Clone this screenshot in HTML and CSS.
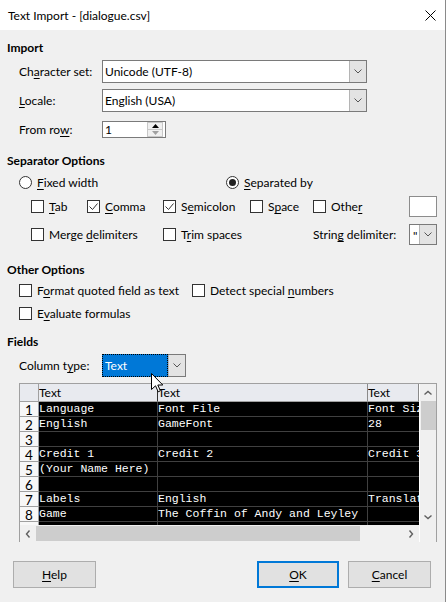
FILE: index.html
```html
<!DOCTYPE html>
<html>
<head>
<meta charset="utf-8">
<title>Text Import</title>
<link rel="stylesheet" href="styles.css">
</head>
<body>
<div class="window">
  <div class="titlebar">
    <span class="title">Text Import - [dialogue.csv]</span>
    <svg class="close" width="11" height="11" viewBox="0 0 11 11"><path d="M0.5 0.5 L10.5 10.5 M10.5 0.5 L0.5 10.5" stroke="#000" stroke-width="1" fill="none"/></svg>
  </div>
  <div class="dialog">
    <div class="hdr h-import">Import</div>

    <div class="row r-charset">
      <span class="lbl">Ch<u>a</u>racter set:</span>
      <div class="combo combo-wide"><span class="val">Unicode (UTF-8)</span><span class="cbtn"><svg width="8" height="5" viewBox="0 0 8 5"><path d="M0.5 0.5 L4 4 L7.5 0.5" stroke="#555" fill="none"/></svg></span></div>
    </div>
    <div class="row r-locale">
      <span class="lbl"><u>L</u>ocale:</span>
      <div class="combo combo-wide"><span class="val">English (USA)</span><span class="cbtn"><svg width="8" height="5" viewBox="0 0 8 5"><path d="M0.5 0.5 L4 4 L7.5 0.5" stroke="#555" fill="none"/></svg></span></div>
    </div>
    <div class="row r-fromrow">
      <span class="lbl">From ro<u>w</u>:</span>
      <div class="spin"><span class="val">1</span>
        <span class="spinbtns">
          <span class="sb up"><svg width="7" height="4" viewBox="0 0 7 4"><path d="M0 4 L3.5 0 L7 4 Z" fill="#000"/></svg></span>
          <span class="sb down"><svg width="7" height="4" viewBox="0 0 7 4"><path d="M0 0 L3.5 4 L7 0 Z" fill="#a0a0a0"/></svg></span>
        </span>
      </div>
    </div>

    <div class="hdr h-sep">Separator Options</div>
    <div class="row r-radio">
      <label class="opt w-fixed"><span class="radio"></span><span><u>F</u>ixed width</span></label>
      <label class="opt"><span class="radio on"><span class="dot"></span></span><span><u>S</u>eparated by</span></label>
    </div>
    <div class="row r-checks">
      <label class="opt w-tab"><span class="cb"></span><span><u>T</u>ab</span></label>
      <label class="opt w-comma"><span class="cb"><svg width="11" height="11" viewBox="0 0 11 11"><path d="M1.5 5.5 L4.5 8.5 L9.5 2.5" stroke="#333" fill="none"/></svg></span><span><u>C</u>omma</span></label>
      <label class="opt w-semi"><span class="cb"><svg width="11" height="11" viewBox="0 0 11 11"><path d="M1.5 5.5 L4.5 8.5 L9.5 2.5" stroke="#333" fill="none"/></svg></span><span>S<u>e</u>micolon</span></label>
      <label class="opt w-space"><span class="cb"></span><span>S<u>p</u>ace</span></label>
      <label class="opt w-other"><span class="cb"></span><span>Othe<u>r</u></span></label>
      <div class="field"></div>
    </div>
    <div class="row r-merge">
      <label class="opt w-merge"><span class="cb"></span><span>Merge <u>d</u>elimiters</span></label>
      <label class="opt w-trim"><span class="cb"></span><span>T<u>r</u>im spaces</span></label>
      <span class="w-strdelim">Strin<u>g</u> delimiter:</span>
      <div class="combo combo-small"><span class="val">"</span><span class="cbtn"><svg width="8" height="5" viewBox="0 0 8 5"><path d="M0.5 0.5 L4 4 L7.5 0.5" stroke="#555" fill="none"/></svg></span></div>
    </div>

    <div class="hdr h-other">Other Options</div>
    <div class="row r-format">
      <label class="opt w-format"><span class="cb"></span><span>F<u>o</u>rmat quoted field as text</span></label>
      <label class="opt"><span class="cb"></span><span>Detect special <u>n</u>umbers</span></label>
    </div>
    <div class="row r-eval">
      <label class="opt"><span class="cb"></span><span>E<u>v</u>aluate formulas</span></label>
    </div>

    <div class="hdr h-fields">Fields</div>
    <div class="row r-coltype">
      <span class="lbl">Column t<u>y</u>pe:</span>
      <div class="combo combo-type"><span class="val sel">Text</span><span class="cbtn"><svg width="8" height="5" viewBox="0 0 8 5"><path d="M0.5 0.5 L4 4 L7.5 0.5" stroke="#555" fill="none"/></svg></span></div>
    </div>

    <div class="grid">
      <div class="gmain">
        <div class="gtable">
          <div class="grow ghead"><div class="rh"></div><div class="c c1">Text</div><div class="c c2">Text</div><div class="c c3">Text</div></div>
          <div class="grow"><div class="rh">1</div><div class="c c1">Language</div><div class="c c2">Font File</div><div class="c c3">Font Size</div></div>
          <div class="grow"><div class="rh">2</div><div class="c c1">English</div><div class="c c2">GameFont</div><div class="c c3">28</div></div>
          <div class="grow"><div class="rh">3</div><div class="c c1"></div><div class="c c2"></div><div class="c c3"></div></div>
          <div class="grow"><div class="rh">4</div><div class="c c1">Credit 1</div><div class="c c2">Credit 2</div><div class="c c3">Credit 3</div></div>
          <div class="grow"><div class="rh">5</div><div class="c c1">(Your Name Here)</div><div class="c c2"></div><div class="c c3"></div></div>
          <div class="grow"><div class="rh">6</div><div class="c c1"></div><div class="c c2"></div><div class="c c3"></div></div>
          <div class="grow"><div class="rh">7</div><div class="c c1">Labels</div><div class="c c2">English</div><div class="c c3">Translation</div></div>
          <div class="grow"><div class="rh">8</div><div class="c c1">Game</div><div class="c c2">The Coffin of Andy and Leyley</div><div class="c c3"></div></div>
          <div class="grow"><div class="rh">9</div><div class="c c1">Item</div><div class="c c2">Item</div><div class="c c3"></div></div>
        </div>
        <div class="hscroll">
          <span class="harrow"><svg width="6" height="8" viewBox="0 0 6 8"><path d="M4.5 0.5 L1.5 4 L4.5 7.5" stroke="#606060" stroke-width="1.4" fill="none"/></svg></span>
          <span class="hthumb"></span>
          <span class="htrack"></span>
          <span class="harrow"><svg width="6" height="8" viewBox="0 0 6 8"><path d="M1.5 0.5 L4.5 4 L1.5 7.5" stroke="#606060" stroke-width="1.4" fill="none"/></svg></span>
        </div>
      </div>
      <div class="vscroll">
        <span class="varrow"><svg width="8" height="6" viewBox="0 0 8 6"><path d="M0.5 4.5 L4 1.5 L7.5 4.5" stroke="#606060" stroke-width="1.4" fill="none"/></svg></span>
        <span class="vthumb"></span>
        <span class="vtrack"></span>
        <span class="varrow"><svg width="8" height="6" viewBox="0 0 8 6"><path d="M0.5 1.5 L4 4.5 L7.5 1.5" stroke="#606060" stroke-width="1.4" fill="none"/></svg></span>
        <span class="vcorner"></span>
      </div>
    </div>

    <div class="row r-buttons">
      <button class="btn b-help"><u>H</u>elp</button>
      <button class="btn b-ok"><u>O</u>K</button>
      <button class="btn b-cancel"><u>C</u>ancel</button>
    </div>
  </div>

  <svg class="cursor" width="13" height="20" viewBox="0 0 13 20"><path d="M0.5 0.5 L0.5 16.5 L4.5 12.8 L7.2 18.8 L9.4 17.8 L6.8 12 L11.8 12 Z" fill="#fff" stroke="#000" stroke-width="1"/></svg>
</div>
</body>
</html>
```

FILE: styles.css
```css
* { box-sizing: border-box; margin: 0; padding: 0; }
html, body { width: 446px; height: 602px; overflow: hidden; }
body {
  font-family: "Lato", "Noto Sans", sans-serif;
  font-size: 12px;
  color: #000;
  background: #f0f0f0;
}
u { text-decoration: underline; text-underline-offset: 2px; text-decoration-thickness: 1px; }

.window {
  position: relative;
  width: 446px;
  height: 602px;
  border-right: 1px solid #8a8a8a;
  display: flex;
  flex-direction: column;
  background: #f0f0f0;
}
.titlebar {
  flex: none;
  height: 30px;
  background: #fff;
  display: flex;
  align-items: center;
  padding-left: 8px;
}
.title { flex: 1; font-size: 12px; }
.close { margin-right: 9px; }

.dialog { flex: 1; display: flex; flex-direction: column; }

.hdr { flex: none; height: 17px; line-height: 17px; font-weight: bold; padding-left: 7px; }
.row { flex: none; display: flex; align-items: center; padding-left: 19px; }

.h-import { margin-top: 9px; }
.r-charset { margin-top: 4px; height: 23px; }
.r-locale { margin-top: 6px; height: 23px; }
.r-fromrow { margin-top: 9px; height: 17px; }
.h-sep { margin-top: 14px; }
.r-radio { margin-top: 6px; height: 15px; }
.r-checks { margin-top: 6px; height: 21px; padding-left: 31px; }
.r-merge { margin-top: 7px; height: 21px; padding-left: 31px; }
.h-other { margin-top: 16px; }
.r-format { margin-top: 5px; height: 15px; }
.r-eval { margin-top: 8px; height: 15px; }
.h-fields { margin-top: 12px; }
.r-coltype { margin-top: 4px; height: 23px; }

.lbl { width: 83px; flex: none; }

/* combo boxes */
.combo {
  display: flex;
  height: 100%;
  border: 1px solid #7a7a7a;
  background: #fff;
}
.combo .val { flex: 1; padding-left: 2px; line-height: 21px; white-space: nowrap; overflow: hidden; }
.cbtn {
  width: 17px;
  flex: none;
  background: #e3e3e3;
  border-left: 1px solid #b4b4b4;
  display: flex;
  align-items: center;
  justify-content: center;
}
.combo-wide { width: 265px; }
.combo-small { width: 28px; }
.combo-small .val { padding-left: 3px; }
.combo-type { width: 84px; }
.combo-type .val.sel {
  background: #0078d7;
  color: #fff;
  border: 1px dotted #000;
  margin: -1px 0 -1px -1px;
  line-height: 21px;
}

/* spin */
.spin {
  width: 64px;
  height: 17px;
  border: 1px solid #7a7a7a;
  background: #fff;
  display: flex;
  align-items: center;
}
.spin .val { flex: 1; padding-left: 2px; line-height: 15px; }
.spinbtns { width: 16px; height: 15px; margin-right: 2px; display: flex; flex-direction: column; }
.sb {
  flex: 1;
  display: flex;
  align-items: center;
  justify-content: center;
  background: #f0f0f0;
  border: 1px solid #c8c8c8;
}
.sb.down { border-top: none; }

/* options */
.opt { display: flex; align-items: center; gap: 5px; flex: none; white-space: nowrap; }
.w-fixed { width: 207px; }
.w-tab { width: 56px; }
.w-comma { width: 76px; }
.w-semi { width: 87px; }
.w-space { width: 63px; }
.w-other { width: 96px; }
.w-merge { width: 132px; }
.w-trim { width: 150px; }
.w-strdelim { width: 96px; flex: none; white-space: nowrap; }
.w-format { width: 173px; }

.cb {
  width: 13px;
  height: 13px;
  flex: none;
  border: 1px solid #333;
  background: #fff;
  display: flex;
}
.radio {
  width: 13px;
  height: 13px;
  flex: none;
  border: 1px solid #333;
  border-radius: 50%;
  background: #fff;
  display: flex;
  align-items: center;
  justify-content: center;
}
.radio .dot { width: 7px; height: 7px; border-radius: 50%; background: #222; }

.field {
  width: 28px;
  height: 21px;
  border: 1px solid #8c8c8c;
  background: #fff;
}

/* grid */
.grid {
  flex: none;
  margin-top: 6px;
  margin-left: 19px;
  width: 418px;
  height: 159px;
  display: flex;
  border-left: 1px solid #a0a0a0;
  border-top: 1px solid #a0a0a0;
  border-right: 1px solid #a0a0a0;
  background: #fff;
}
.gmain { width: 399px; display: flex; flex-direction: column; }
.gtable { height: 141px; overflow: hidden; background: #000; }
.grow {
  display: grid;
  grid-template-columns: 19px 119px 210px 1fr;
  height: 15px;
}
.grow .rh {
  background: #f7f7f7;
  border-right: 1px solid #a0a0a0;
  border-bottom: 1px solid #a0a0a0;
  color: #000;
  font-size: 13.5px;
  line-height: 17px;
  text-align: center;
  overflow: hidden;
}
.grow .c {
  border-right: 1px solid #404040;
  border-bottom: 1px solid #404040;
  color: #fff;
  font-family: "Liberation Mono", "DejaVu Sans Mono", monospace;
  font-size: 11.5px;
  line-height: 13px;
  white-space: nowrap;
  overflow: hidden;
}
.grow .c3 { border-right: none; }
.ghead { height: 18px; }
.ghead .rh { background: #e8eaef; border-bottom: 1px solid #a0a0a0; }
.ghead .c {
  background: #e8eaef;
  color: #000;
  font-family: "Lato", "Noto Sans", sans-serif;
  font-size: 12px;
  line-height: 17px;
  border-bottom: 1px solid #a0a0a0;
  border-right: 1px solid #8a8a8a;
}
.ghead .c1 { border-right: 1px solid #303030; }

.hscroll { height: 17px; display: flex; align-items: center; background: #f0f0f0; }
.harrow { width: 16px; height: 17px; display: flex; align-items: center; justify-content: center; flex: none; }
.hthumb { width: 324px; height: 15px; background: #cdcdcd; flex: none; }
.htrack { flex: 1; }

.vscroll { width: 17px; display: flex; flex-direction: column; align-items: center; background: #f0f0f0; border-left: 1px solid #fff; }
.varrow { height: 17px; width: 16px; display: flex; align-items: center; justify-content: center; flex: none; }
.vthumb { width: 15px; height: 29px; background: #cdcdcd; flex: none; }
.vtrack { flex: 1; }
.vcorner { height: 17px; flex: none; }

/* buttons */
.r-buttons { margin-top: 19px; height: 27px; padding-left: 13px; }
.btn {
  height: 27px;
  font-family: "Lato", "Noto Sans", sans-serif;
  font-size: 12px;
  color: #000;
  background: #e1e1e1;
  border: 1px solid #adadad;
}
.b-help { width: 83px; }
.b-ok { width: 82px; margin-left: 161px; border: 2px solid #0078d7; }
.b-cancel { width: 83px; margin-left: 9px; }

.cursor { position: absolute; left: 151px; top: 373px; }
```
